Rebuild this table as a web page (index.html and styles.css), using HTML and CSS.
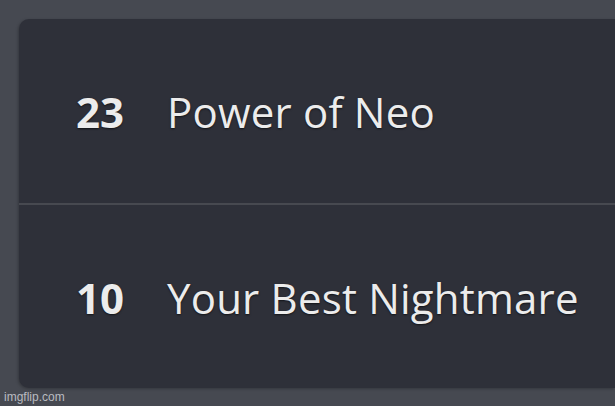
FILE: index.html
```html
<!DOCTYPE html>
<html>
<head>
<meta charset="utf-8">
<link rel="stylesheet" href="styles.css">
</head>
<body>
<div class="page">
  <div class="card">
    <div class="row">
      <span class="num">23</span>
      <span class="name">Power of Neo</span>
    </div>
    <div class="divider"></div>
    <div class="row">
      <span class="num">10</span>
      <span class="name">Your Best Nightmare</span>
    </div>
  </div>
  <div class="watermark">imgflip.com</div>
</div>
</body>
</html>
```
FILE: styles.css
```css
html, body {
  margin: 0;
  padding: 0;
  background: #464951;
  overflow: hidden;
}
.page {
  position: relative;
  width: 615px;
  height: 406px;
  padding: 19px 0 0 19px;
  box-sizing: border-box;
  overflow: hidden;
}
.card {
  width: 596px;
  height: 369px;
  background: #2e3039;
  border-radius: 10px 0 0 10px;
  display: flex;
  flex-direction: column;
  box-shadow: -1px 1px 3px rgba(0,0,0,0.25);
}
.row {
  flex: 1;
  display: flex;
  align-items: center;
  padding-left: 57px;
  padding-top: 2px;
  font-family: "Open Sans", "Noto Sans", sans-serif;
  font-size: 42px;
  color: #ececec;
  text-shadow: 0 1px 2px rgba(0,0,0,0.6);
}
.num {
  width: 91px;
  font-weight: 700;
}
.name {
  font-weight: 400;
  letter-spacing: 0.2px;
}
.divider {
  height: 2px;
  background: #474950;
}
.watermark {
  position: absolute;
  left: 4px;
  bottom: 2px;
  font-family: "Liberation Sans", Arial, sans-serif;
  font-size: 12px;
  color: #b9bbc0;
}
```
